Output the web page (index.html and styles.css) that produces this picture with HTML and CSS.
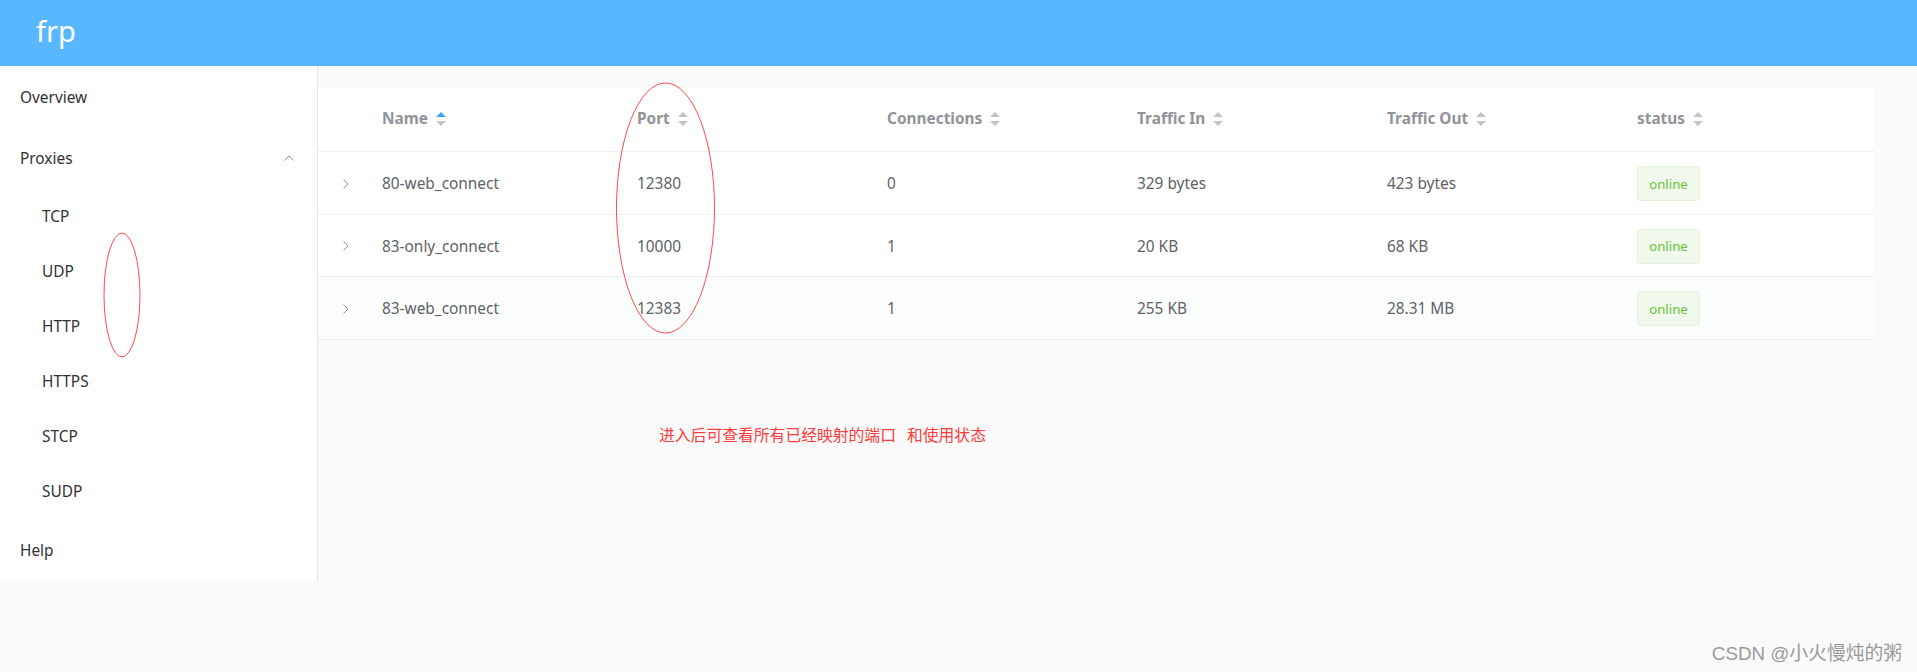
FILE: index.html
```html
<!DOCTYPE html>
<html lang="en">
<head>
<meta charset="utf-8">
<title>frp</title>
<link rel="stylesheet" href="styles.css">
</head>
<body>
<header class="topbar"><span class="logo">frp</span></header>
<div class="layout">
  <aside class="sidebar">
    <ul class="menu">
      <li class="menu-item">Overview</li>
      <li class="menu-title">Proxies
        <svg class="chev" width="10" height="6" viewBox="0 0 10 6"><polyline points="0.5,5.5 5,1 9.5,5.5" fill="none" stroke="#909399" stroke-width="1"/></svg>
      </li>
      <li class="sub-item">TCP</li>
      <li class="sub-item">UDP</li>
      <li class="sub-item">HTTP</li>
      <li class="sub-item">HTTPS</li>
      <li class="sub-item">STCP</li>
      <li class="sub-item">SUDP</li>
      <li class="menu-item">Help</li>
    </ul>
  </aside>
  <main class="content">
    <div class="table">
      <div class="row head">
        <div class="cell"></div>
        <div class="cell">Name <svg class="sort" width="10" height="14" viewBox="0 0 10 14"><polygon points="0,5 5,0 10,5" fill="#409eff"/><polygon points="0,9 10,9 5,14" fill="#c0c4cc"/></svg></div>
        <div class="cell">Port <svg class="sort" width="10" height="14" viewBox="0 0 10 14"><polygon points="0,5 5,0 10,5" fill="#c0c4cc"/><polygon points="0,9 10,9 5,14" fill="#c0c4cc"/></svg></div>
        <div class="cell">Connections <svg class="sort" width="10" height="14" viewBox="0 0 10 14"><polygon points="0,5 5,0 10,5" fill="#c0c4cc"/><polygon points="0,9 10,9 5,14" fill="#c0c4cc"/></svg></div>
        <div class="cell">Traffic In <svg class="sort" width="10" height="14" viewBox="0 0 10 14"><polygon points="0,5 5,0 10,5" fill="#c0c4cc"/><polygon points="0,9 10,9 5,14" fill="#c0c4cc"/></svg></div>
        <div class="cell">Traffic Out <svg class="sort" width="10" height="14" viewBox="0 0 10 14"><polygon points="0,5 5,0 10,5" fill="#c0c4cc"/><polygon points="0,9 10,9 5,14" fill="#c0c4cc"/></svg></div>
        <div class="cell">status <svg class="sort" width="10" height="14" viewBox="0 0 10 14"><polygon points="0,5 5,0 10,5" fill="#c0c4cc"/><polygon points="0,9 10,9 5,14" fill="#c0c4cc"/></svg></div>
      </div>
      <div class="row">
        <div class="cell expand"><svg width="6" height="10" viewBox="0 0 6 10"><polyline points="0.5,0.5 5,5 0.5,9.5" fill="none" stroke="#909399" stroke-width="1"/></svg></div>
        <div class="cell">80-web_connect</div>
        <div class="cell">12380</div>
        <div class="cell">0</div>
        <div class="cell">329 bytes</div>
        <div class="cell">423 bytes</div>
        <div class="cell"><span class="tag">online</span></div>
      </div>
      <div class="row">
        <div class="cell expand"><svg width="6" height="10" viewBox="0 0 6 10"><polyline points="0.5,0.5 5,5 0.5,9.5" fill="none" stroke="#909399" stroke-width="1"/></svg></div>
        <div class="cell">83-only_connect</div>
        <div class="cell">10000</div>
        <div class="cell">1</div>
        <div class="cell">20 KB</div>
        <div class="cell">68 KB</div>
        <div class="cell"><span class="tag">online</span></div>
      </div>
      <div class="row hover">
        <div class="cell expand"><svg width="6" height="10" viewBox="0 0 6 10"><polyline points="0.5,0.5 5,5 0.5,9.5" fill="none" stroke="#909399" stroke-width="1"/></svg></div>
        <div class="cell">83-web_connect</div>
        <div class="cell">12383</div>
        <div class="cell">1</div>
        <div class="cell">255 KB</div>
        <div class="cell">28.31 MB</div>
        <div class="cell"><span class="tag">online</span></div>
      </div>
    </div>
    <p class="note">进入后可查看所有已经映射的端口<span class="gap">和使用状态</span></p>
  </main>
</div>
<svg class="marks" width="1917" height="672" viewBox="0 0 1917 672">
  <ellipse cx="122" cy="295" rx="18" ry="62" fill="none" stroke="#ff4a4a" stroke-width="1"/>
  <ellipse cx="665.5" cy="208" rx="49" ry="125" fill="none" stroke="#ff4a4a" stroke-width="1"/>
</svg>
<div class="watermark">CSDN @小火慢炖的粥</div>
</body>
</html>
```

FILE: styles.css
```css
* { box-sizing: border-box; }
html, body { margin: 0; padding: 0; }
body {
  width: 1917px;
  height: 672px;
  overflow: hidden;
  background: #fafafa;
  font-family: "Noto Sans", "Noto Sans CJK SC", sans-serif;
  position: relative;
}
.topbar {
  height: 66px;
  background: #58b7ff;
  display: flex;
  align-items: center;
  padding-left: 36px;
}
.logo {
  color: #fff;
  font-size: 29px;
  line-height: 1;
  margin-top: -6px;
}
.layout {
  display: flex;
  align-items: flex-start;
}
.sidebar {
  width: 318px;
  flex: none;
  background: #fff;
  border-right: 1px solid #e6e6e6;
}
.menu {
  list-style: none;
  margin: 0;
  padding: 0;
}
.menu-item, .menu-title, .sub-item {
  color: #303133;
  font-size: 15.4px;
  display: flex;
  align-items: center;
}
.menu-item { height: 62px; padding-left: 20px; }
.menu-title { height: 61px; padding-left: 20px; padding-right: 23px; justify-content: space-between; }
.sub-item { height: 55px; padding-left: 42px; }
.chev { margin-top: -2px; }
.content {
  flex: 1;
  padding-top: 22px;
}
.table {
  width: 1556px;
  background: #fff;
}
.row {
  display: grid;
  grid-template-columns: 53px 255px 250px 250px 250px 250px 248px;
  height: 62.5px;
  padding-top: 2px;
  border-bottom: 1px solid #ebeef5;
  align-items: center;
  font-size: 15.4px;
  color: #606266;
}
.row.head {
  height: 64px;
  padding-top: 0;
  padding-bottom: 2px;
  color: #909399;
  font-weight: 700;
}
.row.hover { background: #fcfefe; }
.cell {
  padding-left: 11px;
  display: flex;
  align-items: center;
  white-space: nowrap;
}
.cell.expand { padding-left: 25px; }
.sort { margin-left: 8px; }
.tag {
  display: inline-flex;
  align-items: center;
  justify-content: center;
  width: 63px;
  height: 35px;
  background: #f0f9eb;
  border: 1px solid #e1f3d8;
  border-radius: 4px;
  color: #67c23a;
  font-size: 13.2px;
}
.note {
  margin: 84px 0 0 341px;
  color: #ff3b3b;
  font-size: 15.8px;
  font-family: "Noto Sans CJK SC", sans-serif;
  line-height: 22px;
}
.gap { margin-left: 11px; }
.marks {
  position: absolute;
  left: 0;
  top: 0;
  pointer-events: none;
}
.watermark {
  position: absolute;
  right: 15px;
  bottom: 7px;
  color: #9a9a9a;
  font-size: 18.8px;
  font-family: "Liberation Sans", "Noto Sans CJK SC", sans-serif;
}
```
